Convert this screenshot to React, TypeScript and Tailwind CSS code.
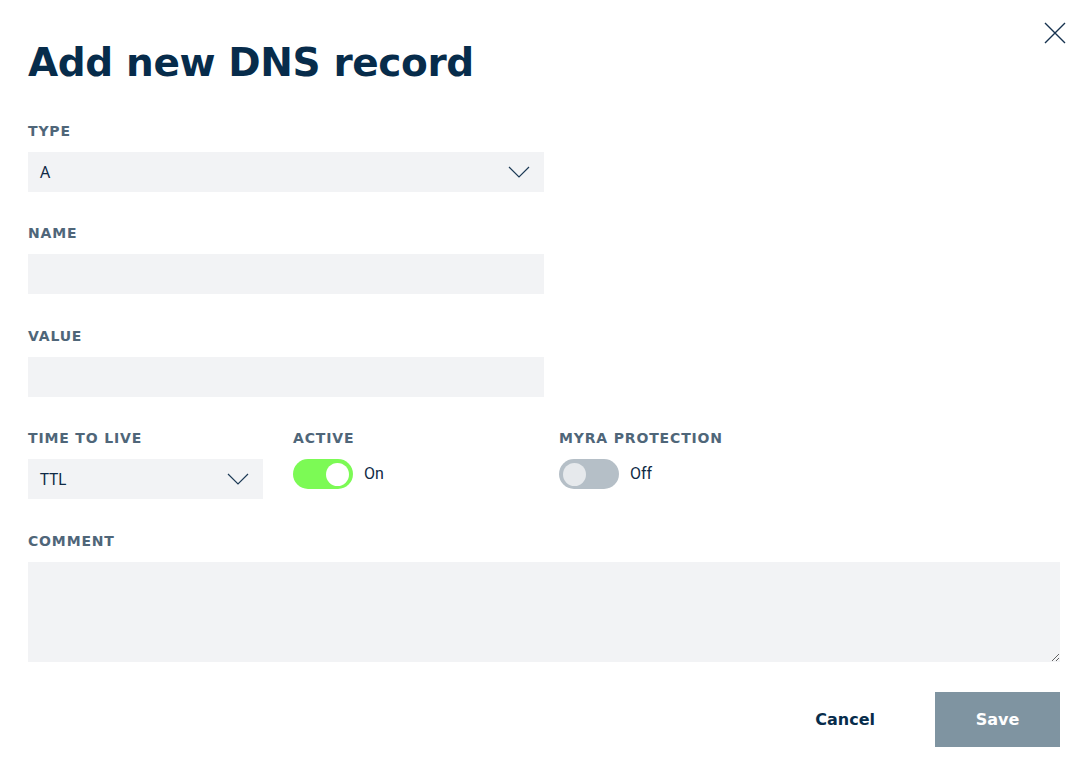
import { useState } from "react";

const labelCls =
  "block pt-[2px] text-[14px] leading-4 font-semibold uppercase tracking-[0.06em] text-[#4f6679] font-['DejaVu_Sans',sans-serif]";

function Chevron() {
  return (
    <svg width="22" height="12" viewBox="0 0 22 12" fill="none" className="text-[#1d3a56]">
      <path d="M1 1l10 10L21 1" stroke="currentColor" strokeWidth="1.2" />
    </svg>
  );
}

function Toggle({ on, onChange }: { on: boolean; onChange: () => void }) {
  return (
    <button
      type="button"
      onClick={onChange}
      className="flex items-center gap-[11px]"
    >
      <span
        className={`flex h-[30px] w-[60px] items-center rounded-full px-[4px] ${
          on ? "justify-end bg-[#7cfa55]" : "justify-start bg-[#b5bfc7]"
        }`}
      >
        <span className={`h-[23px] w-[23px] rounded-full ${on ? "bg-white" : "bg-[#e6e9ec]"}`} />
      </span>
      <span className="font-['Roboto',sans-serif] text-[16px] text-[#0f2a45]">{on ? "On" : "Off"}</span>
    </button>
  );
}

export default function App() {
  const [active, setActive] = useState(true);
  const [myra, setMyra] = useState(false);

  return (
    <div className="relative min-h-[784px] w-full bg-white pl-[28px] pr-[26px] pt-[38px] font-['Noto_Sans',sans-serif]">
      <button className="absolute right-[20px] top-[22px] text-[#16324f]" aria-label="Close">
        <svg width="22" height="22" viewBox="0 0 22 22" fill="none">
          <path d="M1 1l20 20M21 1L1 21" stroke="currentColor" strokeWidth="1.4" />
        </svg>
      </button>

      <h1 className="font-['DejaVu_Sans',sans-serif] text-[39px] leading-[50px] font-bold tracking-[-0.01em] text-[#072c4b]">
        Add new DNS record
      </h1>

      <div className="mt-[33px]">
        <label className={labelCls}>Type</label>
        <div className="mt-[13px] flex h-[40px] w-[516px] items-center justify-between bg-[#f2f3f5] pl-[12px] pr-[14px]">
          <span className="text-[16px] text-[#0f2a45]">A</span>
          <Chevron />
        </div>
      </div>

      <div className="mt-[31px]">
        <label className={labelCls}>Name</label>
        <input className="mt-[13px] block h-[40px] w-[516px] bg-[#f2f3f5] px-[12px] outline-none" />
      </div>

      <div className="mt-[32px]">
        <label className={labelCls}>Value</label>
        <input className="mt-[13px] block h-[40px] w-[516px] bg-[#f2f3f5] px-[12px] outline-none" />
      </div>

      <div className="mt-[31px] flex">
        <div className="w-[265px]">
          <label className={labelCls}>Time to live</label>
          <div className="mt-[13px] flex h-[40px] w-[235px] items-center justify-between bg-[#f2f3f5] pl-[12px] pr-[14px]">
            <span className="text-[16px] text-[#0f2a45]">TTL</span>
            <Chevron />
          </div>
        </div>
        <div className="w-[266px]">
          <label className={labelCls}>Active</label>
          <div className="mt-[13px]">
            <Toggle on={active} onChange={() => setActive(!active)} />
          </div>
        </div>
        <div>
          <label className={labelCls}>Myra protection</label>
          <div className="mt-[13px]">
            <Toggle on={myra} onChange={() => setMyra(!myra)} />
          </div>
        </div>
      </div>

      <div className="mt-[32px]">
        <label className={labelCls}>Comment</label>
        <textarea className="mt-[13px] block h-[100px] w-full bg-[#f2f3f5] px-[12px] py-[10px] outline-none" />
      </div>

      <div className="mt-[30px] flex items-center justify-end">
        <button className="mr-[60px] font-['DejaVu_Sans',sans-serif] text-[16px] font-bold text-[#072c4b]">Cancel</button>
        <button className="h-[55px] w-[125px] bg-[#7f94a1] font-['DejaVu_Sans',sans-serif] text-[16px] font-bold text-white">Save</button>
      </div>
    </div>
  );
}
